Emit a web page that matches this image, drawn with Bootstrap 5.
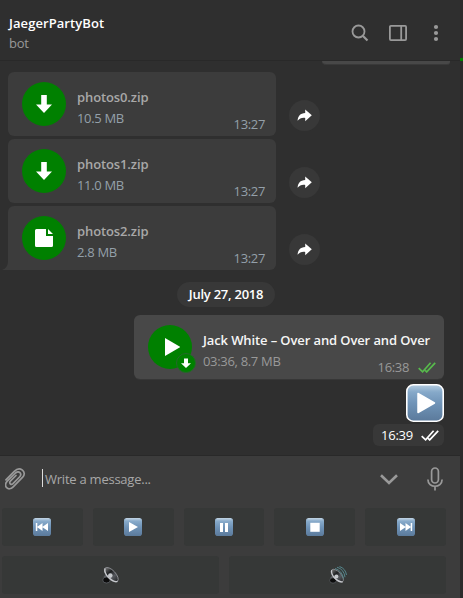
<!DOCTYPE html>
<html lang="en">
<head>
<meta charset="utf-8">
<meta name="viewport" content="width=device-width, initial-scale=1">
<title>JaegerPartyBot</title>
<link href="https://cdn.jsdelivr.net/npm/bootstrap@5.3.0/dist/css/bootstrap.min.css" rel="stylesheet">
<style>
body{font:13px/18px "Open Sans","Noto Sans",sans-serif;letter-spacing:-.24px;background:#2b2b2b;color:#f5f5f5;height:598px;overflow:hidden}
svg{display:block;flex:none}
.app{width:460px;height:598px;background:#2f2f2f}
.edge{width:3px;padding-top:58px}
.edge span{display:block;height:3px;background:#008000}
.topbar{height:61px;border-bottom:1px solid #292929;padding:14px 14px 0 9px}
.title{letter-spacing:.07px;margin-bottom:2px}
.tools{gap:18px;padding-top:9px;color:#999}
.tools svg{width:20px;height:20px}
.dim{color:#999}
.chat{height:395px;border-bottom:1px solid #292929;padding:0 16px 0 8px}
.cut{width:128px;height:4px;margin-right:-6px;background:#484848;border-bottom:1px solid #393939;border-radius:0 0 4px 6px}
.files{gap:3px;margin-top:7px}
.bubble{height:64px;border-radius:6px;background:#3c3c3c;padding:10px 11px 0 14px;position:relative}
.file{width:268px}
.disc{width:44px;height:44px;background:#008000;flex:none}
.info{margin-left:11px;padding-top:6px}
.info .fw-semibold{margin-bottom:3px;letter-spacing:-.11px}
.info .dim,.info .blue{letter-spacing:-.32px}
.stamp{align-self:flex-end;margin-bottom:3px;margin-left:auto}
.stamp,.songtime{letter-spacing:-.35px}
.grey{color:#a8a8a8}
.blue{color:#94a0aa}
.fwd{width:31px;height:31px;background:#383838;margin:28px 0 0 13px;padding-right:1px}
.tail{position:absolute;left:-6px;bottom:0}
.day{background:#383838;border-radius:13px;width:98px;height:25px;line-height:25px;margin:12px 0 8px}
.song{width:310px;background:#484848;box-shadow:0 1px 0 #373737}
.corner{position:absolute;left:42px;top:38px}
.songtime{position:absolute;right:8px;bottom:3px;gap:9px}
.emoji{margin-top:5px}
.seen{width:71px;height:22px;margin-top:2px;background:#383838;border-radius:6px;padding:0 5px 0 8px}
.foot{height:142px;background:#3c3c3c}
.write{height:52px;padding:0 17px 6px 5px}
.caret{width:1px;height:18px;background:#ddd;margin:-2px 2px 0 16px}
.mic{margin-left:29px}
.pad{gap:10px;padding:0 14px 0 2px}
.keys{gap:10px}
.keys .btn{height:38px;padding:0;border:0;border-radius:3px;background:#363837;flex:1 1 0}
</style>
</head>
<body>
<svg width="0" height="0" class="position-absolute">
<defs>
<linearGradient id="sky" x2="0" y2="1"><stop stop-color="#b4cce0"/><stop offset=".2" stop-color="#86a9c9"/><stop offset=".5" stop-color="#7094b8"/><stop offset="1" stop-color="#5b7a9b"/></linearGradient>
<linearGradient id="cone" x2="1" y2="0"><stop stop-color="#777"/><stop offset=".35" stop-color="#1c1e20"/><stop offset=".65" stop-color="#55585d"/><stop offset="1" stop-color="#242628"/></linearGradient>
<symbol id="down" viewBox="0 0 16 18"><path fill="#fff" d="M5.2 0h5.600v9.600H16L8 18 0 9.600h5.200z"/></symbol>
<symbol id="share" viewBox="0 0 15 13"><path fill="#fff" d="M8.200.5 14.800 6.300 8.200 12.300V8.900C4.800 8.500 2.600 9.400.6 11.800.7 7.200 3.300 4.100 8.200 3.900z"/></symbol>
<symbol id="ticks" viewBox="0 0 18 11"><path fill="none" stroke="currentColor" stroke-width="1.700" d="M.7 6.200 4.600 9.800 12.600.8M7.100 8.300l1.600 1.600L17.200.8"/></symbol>
<symbol id="tile" viewBox="0 0 18 18"><rect width="18" height="18" rx="2.800" fill="url(#sky)"/><path d="M2 .8h14" stroke="#c9dae8" stroke-width=".7"/></symbol>
<symbol id="speaker" viewBox="0 0 18 18"><path d="M1.500 11 4 8l6 4-3 4z" fill="#5b5e63"/><ellipse cx="4.500" cy="14" rx="3.800" ry="3" fill="#0c0c0c" stroke="#606368" stroke-width=".8"/><ellipse cx="9.300" cy="8.700" rx="9" ry="4.300" transform="rotate(47 9.300 8.700)" fill="url(#cone)" stroke="#8e9095" stroke-width=".9"/><path d="M3 2.500Q2 7 7 11.800T15.500 15.400" fill="none" stroke="#c8cace" stroke-width="1.300"/><circle cx="8.300" cy="9.600" r="2.300" fill="#c5c8cc"/></symbol>
</defs>
</svg>
<div class="d-flex">
<main class="app d-flex flex-column">
<header class="topbar d-flex justify-content-between">
<div><div class="title fw-semibold text-white">JaegerPartyBot</div><div class="dim">bot</div></div>
<div class="tools d-flex">
<svg viewBox="0 0 20 20" fill="none" stroke="currentColor" stroke-width="1.800"><circle cx="8.500" cy="8.500" r="6"/><path d="m13 13 4.500 4.500" stroke-width="2.200"/></svg>
<svg viewBox="0 0 20 20" fill="none" stroke="currentColor" stroke-width="1.800"><rect x="1.900" y="2.900" width="16.200" height="14.200" rx="1"/><path d="M13.200 3v14"/></svg>
<svg viewBox="0 0 20 20" fill="currentColor"><circle cx="10" cy="4" r="2.100"/><circle cx="10" cy="10" r="2.100"/><circle cx="10" cy="16" r="2.100"/></svg>
</div>
</header>
<section class="chat d-flex flex-column">
<div class="cut align-self-end"></div>
<div class="files d-flex flex-column">
<div class="d-flex">
<div class="bubble file d-flex align-items-start">
<div class="disc rounded-circle d-flex align-items-center justify-content-center"><svg width="16" height="18"><use href="#down"/></svg></div>
<div class="info"><div class="fw-semibold grey">photos0.zip</div><div class="blue">10.5 MB</div></div>
<span class="stamp blue">13:27</span>
</div>
<div class="fwd rounded-circle d-flex align-items-center justify-content-center"><svg width="15" height="13"><use href="#share"/></svg></div>
</div>
<div class="d-flex">
<div class="bubble file d-flex align-items-start">
<div class="disc rounded-circle d-flex align-items-center justify-content-center"><svg width="16" height="18"><use href="#down"/></svg></div>
<div class="info"><div class="fw-semibold grey">photos1.zip</div><div class="blue">11.0 MB</div></div>
<span class="stamp blue">13:27</span>
</div>
<div class="fwd rounded-circle d-flex align-items-center justify-content-center"><svg width="15" height="13"><use href="#share"/></svg></div>
</div>
<div class="d-flex">
<div class="bubble file d-flex align-items-start">
<svg class="tail" width="12" height="12" viewBox="0 0 12 12"><path fill="#3c3c3c" d="M6 0h6v12H0q6-2 6-9z"/></svg>
<div class="disc rounded-circle d-flex align-items-center justify-content-center"><svg width="18" height="18" viewBox="0 0 18 18"><path fill="#fff" d="M1.500 0H11v7h7v9.500a1.500 1.500 0 0 1-1.500 1.500h-15A1.500 1.500 0 0 1 0 16.500v-15A1.500 1.500 0 0 1 1.500 0zM13 0l5 5h-5z"/></svg></div>
<div class="info"><div class="fw-semibold grey">photos2.zip</div><div class="blue">2.8 MB</div></div>
<span class="stamp blue">13:27</span>
</div>
<div class="fwd rounded-circle d-flex align-items-center justify-content-center"><svg width="15" height="13"><use href="#share"/></svg></div>
</div>
</div>
<div class="day fw-semibold align-self-center text-center text-white">July 27, 2018</div>
<div class="bubble song align-self-end d-flex align-items-start">
<div class="disc rounded-circle d-flex align-items-center justify-content-center"><svg width="20" height="18" viewBox="0 0 20 18"><path fill="#fff" d="M5 0 20.500 9 5 18z"/></svg></div>
<svg class="corner" width="20" height="20" viewBox="0 0 20 20"><circle cx="10" cy="10" r="9.500" fill="#008000" stroke="#25682a"/><path fill="#fff" d="M8 5.500h4v4.700h3L10 15l-5-4.800h3z"/></svg>
<div class="info text-nowrap"><div class="fw-semibold">Jack White – Over and Over and Over</div><div class="dim">03:36, 8.7 MB</div></div>
<div class="songtime d-flex align-items-center dim"><span>16:38</span><svg width="18" height="11" style="color:#57b94c"><use href="#ticks"/></svg></div>
</div>
<svg class="emoji align-self-end" width="38" height="38" viewBox="0 0 38 38"><rect x=".8" y=".8" width="36.400" height="36.400" rx="6.500" fill="url(#sky)" stroke="#fff" stroke-width="1.600"/><path fill="#fff" stroke="#fff" stroke-width="1.500" stroke-linejoin="round" d="m12 9.500 16.500 9.500L12 28.500z"/></svg>
<div class="seen align-self-end d-flex align-items-center justify-content-between text-white"><span>16:39</span><svg width="18" height="11"><use href="#ticks"/></svg></div>
</section>
<footer class="foot">
<div class="write d-flex align-items-center">
<svg width="21" height="23" viewBox="0 0 21 23" fill="none" stroke="#999" stroke-width="1.700" stroke-linecap="round"><path d="M.9 11.800 9.300 3.300C15-2.300 22.500 4 17.700 9.200L8.200 18.800C3.400 24-2.500 17.800 2.300 13.200L10.500 5c3.500-3 7 .8 4 4L8 15.700c-2 1.900-4.500-.8-2.600-2.600L11 7.500"/></svg>
<div class="caret"></div><span class="grey">Write a message...</span>
<svg class="ms-auto" width="18" height="11" viewBox="0 0 18 11"><path fill="none" stroke="#999" stroke-width="2.600" d="M1 1.300 9 9l8-7.700"/></svg>
<svg class="mic" width="16" height="24" viewBox="0 0 16 24" fill="none" stroke="#999" stroke-width="1.700"><rect x="4.600" y="1" width="6.800" height="15" rx="3.400"/><path d="M.9 12.500c0 9 14.200 9 14.200 0M8 19v4.500"/></svg>
</div>
<div class="pad d-flex flex-column">
<div class="keys d-flex">
<button class="btn d-flex align-items-center justify-content-center"><svg width="18" height="18" viewBox="0 0 18 18"><use href="#tile"/><path fill="#fff" d="M2.800 5h1.500v3.700L9.500 5v3.700L15 5v8L9.500 9.300V13L4.300 9.300V13H2.800z"/></svg></button>
<button class="btn d-flex align-items-center justify-content-center"><svg width="18" height="18" viewBox="0 0 18 18"><use href="#tile"/><path fill="#fff" d="m5 4 9 5-9 5z"/></svg></button>
<button class="btn d-flex align-items-center justify-content-center"><svg width="18" height="18" viewBox="0 0 18 18"><use href="#tile"/><path fill="#fff" d="M5 5h3v9H5zM10 5h3v9h-3z"/></svg></button>
<button class="btn d-flex align-items-center justify-content-center"><svg width="18" height="18" viewBox="0 0 18 18"><use href="#tile"/><path fill="#fff" d="M4.300 4.800h9.400v9H4.300z"/></svg></button>
<button class="btn d-flex align-items-center justify-content-center"><svg width="18" height="18" viewBox="0 0 18 18"><use href="#tile"/><path fill="#fff" d="M15.200 5h-1.500v3.700L8.500 5v3.700L3 5v8l5.500-3.700V13l5.200-3.700V13h1.500z"/></svg></button>
</div>
<div class="keys d-flex">
<button class="btn d-flex align-items-center justify-content-center"><svg width="18" height="18"><use href="#speaker"/></svg></button>
<button class="btn d-flex align-items-center justify-content-center"><svg width="18" height="18" viewBox="0 0 18 18"><use href="#speaker" x="0" y="2" width="16" height="16"/><g fill="none" stroke="#55868c" stroke-width="1"><path d="M6 2.500q7 2 8.500 10M8 1.200q7 2 8 10M10.500.5q6 2 7 8.500"/></g></svg></button>
</div>
</div>
</footer>
</main>
<aside class="edge"><span></span></aside>
</div>
<script src="https://cdn.jsdelivr.net/npm/bootstrap@5.3.0/dist/js/bootstrap.bundle.min.js"></script>
</body>
</html>
